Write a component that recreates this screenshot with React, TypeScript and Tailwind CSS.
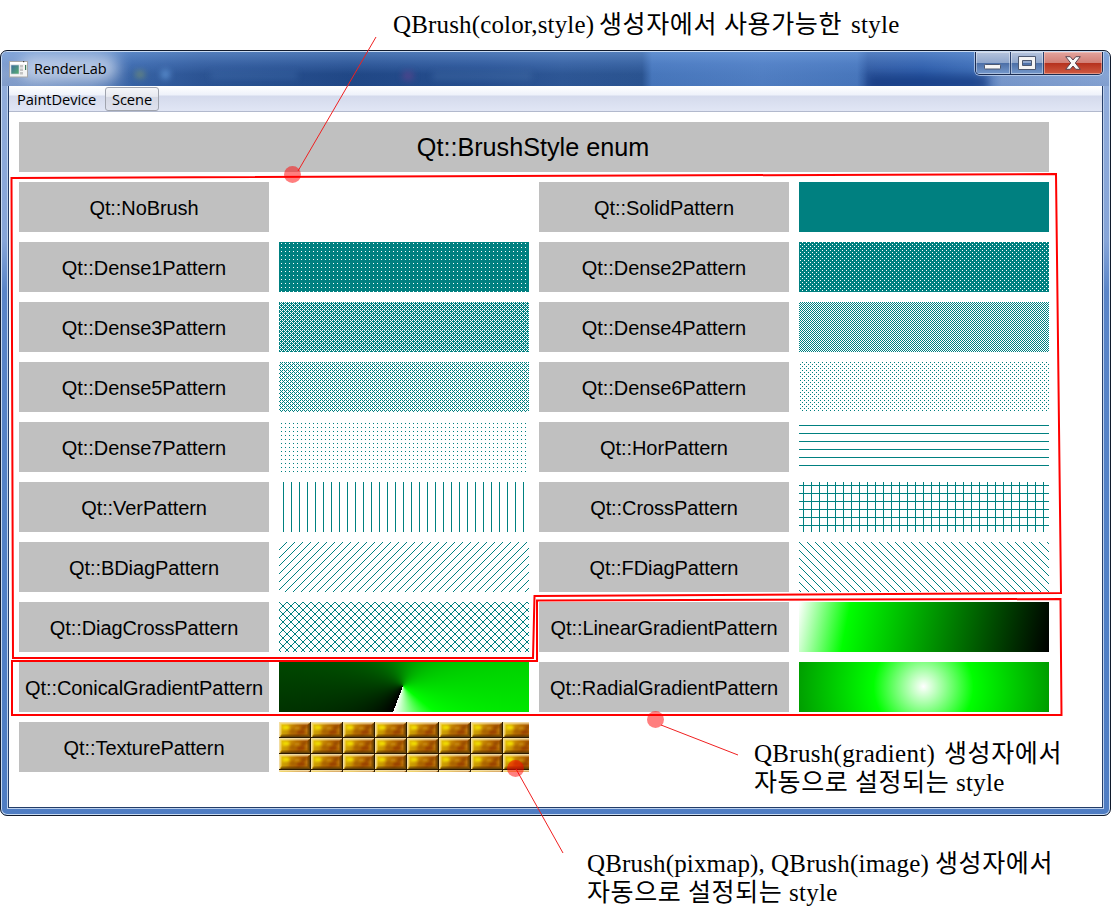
import React from "react";

const TEAL = "#008080";

/* 8x8 brush bitmaps, one byte per row, least significant bit on the left. */
const BITMAPS: Record<string, number[]> = {
  dense1: [0xff, 0xbb, 0xff, 0xff, 0xff, 0xbb, 0xff, 0xff],
  dense2: [0x77, 0xff, 0xdd, 0xff, 0x77, 0xff, 0xdd, 0xff],
  dense3: [0x55, 0xbb, 0x55, 0xee, 0x55, 0xbb, 0x55, 0xee],
  dense4: [0xaa, 0x55, 0xaa, 0x55, 0xaa, 0x55, 0xaa, 0x55],
  dense5: [0xaa, 0x44, 0xaa, 0x11, 0xaa, 0x44, 0xaa, 0x11],
  dense6: [0x88, 0x00, 0x22, 0x00, 0x88, 0x00, 0x22, 0x00],
  dense7: [0x00, 0x44, 0x00, 0x00, 0x00, 0x44, 0x00, 0x00],
  hor: [0x00, 0x00, 0x00, 0xff, 0x00, 0x00, 0x00, 0x00],
  ver: [0x10, 0x10, 0x10, 0x10, 0x10, 0x10, 0x10, 0x10],
  cross: [0x10, 0x10, 0x10, 0xff, 0x10, 0x10, 0x10, 0x10],
  bdiag: [0x80, 0x40, 0x20, 0x10, 0x08, 0x04, 0x02, 0x01],
  fdiag: [0x01, 0x02, 0x04, 0x08, 0x10, 0x20, 0x40, 0x80],
  diagcross: [0x81, 0x42, 0x24, 0x18, 0x18, 0x24, 0x42, 0x81],
};

function bitmapPath(rows: number[]) {
  let d = "";
  rows.forEach((row, y) => {
    for (let x = 0; x < 8; x++) if (row & (1 << x)) d += `M${x} ${y}h1v1h-1z`;
  });
  return d;
}

function BitmapSwatch({ name }: { name: string }) {
  return (
    <svg width="250" height="50" className="block" shapeRendering="crispEdges">
      <defs>
        <pattern id={name} width="8" height="8" patternUnits="userSpaceOnUse">
          <path d={bitmapPath(BITMAPS[name])} fill={TEAL} />
        </pattern>
      </defs>
      <rect width="250" height="50" fill={`url(#${name})`} />
    </svg>
  );
}

function LinearSwatch() {
  return (
    <svg width="250" height="50" className="block">
      <defs>
        <linearGradient id="lin" gradientUnits="userSpaceOnUse" x1="0" y1="0" x2="250" y2="50">
          <stop offset="0" stopColor="#fff" />
          <stop offset="0.2" stopColor="#0f0" />
          <stop offset="1" stopColor="#000" />
        </linearGradient>
      </defs>
      <rect width="250" height="50" fill="url(#lin)" />
    </svg>
  );
}

function RadialSwatch() {
  return (
    <svg width="250" height="50" className="block">
      <defs>
        <radialGradient id="rad" gradientUnits="userSpaceOnUse" cx="124.5" cy="24.5" r="250">
          <stop offset="0" stopColor="#fff" />
          <stop offset="0.2" stopColor="#0f0" />
          <stop offset="1" stopColor="#000" />
        </radialGradient>
      </defs>
      <rect width="250" height="50" fill="url(#rad)" />
    </svg>
  );
}

function TextureSwatch() {
  return (
    <svg width="250" height="50" className="block">
      <defs>
        <linearGradient id="gold" x1="0" y1="0" x2="1" y2="0.35">
          <stop offset="0" stopColor="#ecd200" />
          <stop offset="0.3" stopColor="#d6a406" />
          <stop offset="0.55" stopColor="#b87000" />
          <stop offset="0.8" stopColor="#a85400" />
          <stop offset="1" stopColor="#b46c04" />
        </linearGradient>
        <filter id="soft" x="-50%" y="-50%" width="200%" height="200%">
          <feGaussianBlur stdDeviation="1.1" />
        </filter>
        <pattern id="brick" width="32" height="16" patternUnits="userSpaceOnUse">
          <rect width="32" height="16" fill="url(#gold)" />
          <g filter="url(#soft)">
            <ellipse cx="7" cy="5.5" rx="3.5" ry="2" fill="#f2de00" />
            <ellipse cx="14" cy="9.5" rx="3" ry="2" fill="#a86400" />
            <ellipse cx="18" cy="6" rx="3" ry="1.6" fill="#c88a08" />
            <ellipse cx="22" cy="10" rx="4" ry="1.8" fill="#984000" />
            <ellipse cx="25" cy="5.5" rx="2.4" ry="1.5" fill="#964c00" />
            <ellipse cx="6" cy="10.5" rx="3" ry="1.6" fill="#c89c00" />
            <ellipse cx="28" cy="8" rx="1.5" ry="2" fill="#c27a10" />
          </g>
          <path d="M0 0H31L28.500 2.500H2.500V12L0 15Z" fill="#ffe9b4" opacity="0.5" />
          <path d="M0 0H31V1.200H1.200V15H0Z" fill="#f4deaa" opacity="0.85" />
          <path d="M31 1V15H1L3 12.500H28.500V3Z" fill="#4a2c00" opacity="0.45" />
          <path d="M30 2V14H2V15H31V1Z" fill="#5c3d08" opacity="0.7" />
          <path d="M31 0H32V16H0V15H31Z" fill="#2c1a00" />
        </pattern>
      </defs>
      <rect width="250" height="50" fill="url(#brick)" />
    </svg>
  );
}

function Swatch({ kind }: { kind: string }) {
  switch (kind) {
    case "none":
      return <div className="h-[50px]" />;
    case "solid":
      return <div className="h-[50px] bg-[#008080]" />;
    case "linear":
      return <LinearSwatch />;
    case "radial":
      return <RadialSwatch />;
    case "texture":
      return <TextureSwatch />;
    case "conical":
      return (
        <div className="h-[50px] bg-[conic-gradient(from_201deg_at_124px_24px,#000_0%,#0f0_80%,#fff_100%)]" />
      );
    default:
      return <BitmapSwatch name={kind} />;
  }
}

const CELLS: [string, string][] = [
  ["NoBrush", "none"],
  ["SolidPattern", "solid"],
  ["Dense1Pattern", "dense1"],
  ["Dense2Pattern", "dense2"],
  ["Dense3Pattern", "dense3"],
  ["Dense4Pattern", "dense4"],
  ["Dense5Pattern", "dense5"],
  ["Dense6Pattern", "dense6"],
  ["Dense7Pattern", "dense7"],
  ["HorPattern", "hor"],
  ["VerPattern", "ver"],
  ["CrossPattern", "cross"],
  ["BDiagPattern", "bdiag"],
  ["FDiagPattern", "fdiag"],
  ["DiagCrossPattern", "diagcross"],
  ["LinearGradientPattern", "linear"],
  ["ConicalGradientPattern", "conical"],
  ["RadialGradientPattern", "radial"],
  ["TexturePattern", "texture"],
];

function AppIcon() {
  return (
    <svg width="19" height="17" viewBox="0 0 19 17">
      <defs>
        <linearGradient id="appicon" x1="0" y1="0" x2="1" y2="1">
          <stop offset="0" stopColor="#3c6c9c" />
          <stop offset="1" stopColor="#58b070" />
        </linearGradient>
      </defs>
      <rect x="0.5" y="0.5" width="18" height="15.5" fill="#f4f4f4" stroke="#a8a8a8" />
      <rect x="1" y="1" width="17" height="2" fill="#fff" />
      <rect x="14" y="0" width="1.2" height="1.2" fill="#444" />
      <rect x="2" y="4" width="8" height="9" fill="url(#appicon)" stroke="#c8d4dc" strokeWidth="0.6" />
      <path d="M11 4h3v2.500h-3zM11 7.500h3v2.500h-3zM11 11h3v2.500h-3z" fill="#c4c4c4" />
      <rect x="16" y="4" width="1.2" height="5" fill="#3a7a5a" />
    </svg>
  );
}

function CaptionButtons() {
  return (
    <div className="mr-[6px] flex h-[23px] w-[128px] shrink-0 overflow-hidden rounded-b-[5px] border border-t-0 border-[#1c2c50] shadow-[0_0_0_1px_rgba(210,226,248,0.65)]">
      <div className="flex w-[35px] items-center justify-center border-r border-[#2b426e] bg-[linear-gradient(#b5c4dd_0%,#90a7cc_48%,#4b6ea6_50%,#7699cc_100%)] pt-[8px] shadow-[inset_0_0_0_1px_rgba(255,255,255,0.4)]">
        <svg width="18" height="6" className="block">
          <rect x="0.5" y="0.5" width="16" height="4.500" rx="0.8" fill="#f6f6f6" stroke="#4c5870" />
        </svg>
      </div>
      <div className="flex w-[33px] items-center justify-center border-r border-[#2b426e] bg-[linear-gradient(#b5c4dd_0%,#90a7cc_48%,#4b6ea6_50%,#7699cc_100%)] shadow-[inset_0_0_0_1px_rgba(255,255,255,0.4)]">
        <svg width="18" height="14" className="block">
          <path
            fillRule="evenodd"
            d="M0.500 0.500h17v13h-17zM4.500 4.500v5h9v-5z"
            fill="#f4f4f4"
            stroke="#4c5870"
          />
        </svg>
      </div>
      <div className="flex flex-1 items-center justify-center bg-[linear-gradient(#e2a49e_0%,#d27f76_48%,#b5301d_50%,#cf5a42_100%)] shadow-[inset_0_0_0_1px_rgba(255,220,210,0.45)]">
        <svg width="16" height="14" className="block">
          <path
            d="M0.700 0.700H5.200L8 4L10.800 0.700H15.300L10.300 7L15.300 13.300H10.800L8 10L5.200 13.300H0.700L5.700 7Z"
            fill="#f8f8f8"
            stroke="#5a4450"
          />
        </svg>
      </div>
    </div>
  );
}

function TitleBar() {
  return (
    <div className="relative flex h-[34px] shrink-0 justify-between overflow-hidden rounded-t-[5px] bg-[linear-gradient(to_right,#8ea8d2_0px,#6f90c4_90px,#3a66a8_130px,#2d5594_200px,#214886_350px,#274f8f_480px,#2f5896_560px,#2c5591_640px,#4a7abf_650px,#5482c6_760px,#4b7abf_855px,#3059a0_866px,#2c5ba8_920px,#3b6bb4_970px,#7f9ed0_1000px,#8daad8_1108px)]">
      <div className="absolute inset-0 bg-[linear-gradient(rgba(120,165,225,0.5),rgba(90,135,205,0.3)_35%,rgba(20,60,130,0.05)_65%,rgba(20,60,130,0.1))]" />
      <div className="absolute top-[3px] left-[18px] h-[26px] w-[98px] rounded-full bg-[#dbe5f3]/65 blur-[7px]" />
      <div className="absolute top-[19px] left-[133px] h-[7px] w-[10px] rounded-full bg-[#819a68]/70 blur-[3px]" />
      <div className="absolute top-[18px] left-[159px] h-[9px] w-[9px] rounded-full bg-[#6fa8e8]/70 blur-[3px]" />
      <div className="absolute top-[20px] left-[208px] h-[7px] w-[88px] rounded bg-[#517fbd]/30 blur-[3px]" />
      <div className="absolute top-[19px] left-[400px] h-[10px] w-[12px] rounded-full bg-[#76418f]/50 blur-[3px]" />
      <div className="absolute top-[20px] left-[430px] h-[8px] w-[100px] rounded bg-[#5580b5]/30 blur-[3px]" />
      <div className="absolute top-[24px] left-[866px] h-[14px] w-[120px] bg-[#12367c]/70 blur-[4px]" />
      <div className="relative flex items-center pl-[7px]">
        <AppIcon />
        <span className="ml-[6px] font-['Open_Sans','Noto_Sans',sans-serif] text-[14.5px] tracking-[-0.1px] text-black">
          RenderLab
        </span>
      </div>
      <div className="relative">
        <CaptionButtons />
      </div>
    </div>
  );
}

function MenuBar() {
  return (
    <div className="flex h-[26px] shrink-0 items-center border-b border-[#b2b9cd] bg-[linear-gradient(#ffffff_0px,#eef2fa_9px,#d4daec_10px,#e1e6f5_25px)] font-['Open_Sans','Noto_Sans',sans-serif] text-[14.7px] text-black">
      <span className="w-[96px] pt-px pl-[8px] tracking-[-0.1px]">PaintDevice</span>
      <span className="flex h-[24px] w-[54px] items-center justify-center rounded-[3px] border border-[#a0a4ae] bg-[linear-gradient(#f5f6f9_0%,#e8eaf1_38%,#d5d8e4_42%,#dfe2ee_100%)] pt-px tracking-[-0.1px]">
        Scene
      </span>
    </div>
  );
}

function Window() {
  return (
    <div className="flex h-[766px] w-[1111px] flex-col rounded-[7px] border border-[#101a2c] bg-[linear-gradient(#93aedb_0px,#86a5d8_190px,#5a85c8_240px,#5080c6_560px,#4f7dc3_100%)] shadow-[inset_0_0_0_1px_#c9dbf2]">
      <div className="px-px pt-px">
        <TitleBar />
      </div>
      <div className="mx-[7px] -mt-px mb-[7px] flex flex-1 flex-col border border-[#243d68] bg-white shadow-[0_0_0_1px_#bcd0ec]">
        <MenuBar />
        <div className="grid grid-cols-[250px_250px_250px_250px] gap-[10px] pt-[10px] pl-[10px] font-['Liberation_Sans',Arial,sans-serif] text-[20px] text-black">
          <div className="col-span-4 flex h-[50px] items-center justify-center bg-[#c0c0c0] text-[25.2px]">
            <span className="pt-[1px] pr-[2px]">Qt::BrushStyle enum</span>
          </div>
          {CELLS.map(([name, kind]) => (
            <React.Fragment key={name}>
              <div className="flex h-[50px] items-center justify-center bg-[#c0c0c0] tracking-[-0.08px] whitespace-nowrap">
                <span className="pt-[2px]">Qt::{name}</span>
              </div>
              <Swatch kind={kind} />
            </React.Fragment>
          ))}
        </div>
      </div>
    </div>
  );
}

function Markup() {
  return (
    <svg width="1111" height="919" className="pointer-events-none absolute inset-0">
      <g fill="none" stroke="#ff0000" strokeWidth="2">
        <path d="M11.500 178L1056 174L1061 593L534.500 596L533 658H13Z" />
        <path d="M537 600.500L1060.500 599L1061.500 715H12V661H537Z" />
      </g>
      <g stroke="#f02020" strokeWidth="1">
        <path d="M376 37L298 171" />
        <path d="M661 725L738 755" />
        <path d="M516 769L563 853" />
      </g>
      <g fill="#ff0000" fillOpacity="0.5">
        <circle cx="292.500" cy="174.500" r="8.500" />
        <circle cx="655.500" cy="719.500" r="8.500" />
        <circle cx="515.500" cy="768.500" r="8.500" />
      </g>
    </svg>
  );
}

function Latin({ children, className }: { children: string; className: string }) {
  return (
    <span className={`shrink-0 font-['Liberation_Serif',serif] text-[25px] ${className}`}>{children}</span>
  );
}

function Hangul({ children, className }: { children: string; className: string }) {
  return (
    <span
      className={`shrink-0 font-['Noto_Sans_CJK_KR',sans-serif] text-[25px] font-normal tracking-[0.6px] ${className}`}
    >
      {children}
    </span>
  );
}

function AutoStyleLine() {
  return (
    <div className="flex h-[29px] items-baseline">
      <Hangul className="w-[101px]">자동으로</Hangul>
      <Hangul className="w-[101px]">설정되는</Hangul>
      <Latin className="tracking-[0.3px]">style</Latin>
    </div>
  );
}

export default function App() {
  return (
    <div className="relative h-[919px] w-[1111px] overflow-hidden bg-white pt-[50px]">
      <Window />
      <Markup />
      <div className="absolute top-[8px] left-[393px] leading-[29px] whitespace-nowrap text-black">
        <div className="flex h-[29px] items-baseline">
          <Latin className="w-[206px] tracking-[0.15px]">QBrush(color,style)</Latin>
          <Hangul className="w-[125px]">생성자에서</Hangul>
          <Hangul className="w-[127px]">사용가능한</Hangul>
          <Latin className="tracking-[0.3px]">style</Latin>
        </div>
      </div>
      <div className="absolute top-[737px] left-[754px] leading-[29px] whitespace-nowrap text-black">
        <div className="flex h-[29px] items-baseline">
          <Latin className="w-[190px] tracking-[0.3px]">QBrush(gradient)</Latin>
          <Hangul className="">생성자에서</Hangul>
        </div>
        <AutoStyleLine />
      </div>
      <div className="absolute top-[847px] left-[587px] leading-[29px] whitespace-nowrap text-black">
        <div className="flex h-[29px] items-baseline">
          <Latin className="w-[184px] tracking-[0.15px]">QBrush(pixmap),</Latin>
          <Latin className="w-[164px] tracking-[0.2px]">QBrush(image)</Latin>
          <Hangul className="">생성자에서</Hangul>
        </div>
        <AutoStyleLine />
      </div>
    </div>
  );
}
